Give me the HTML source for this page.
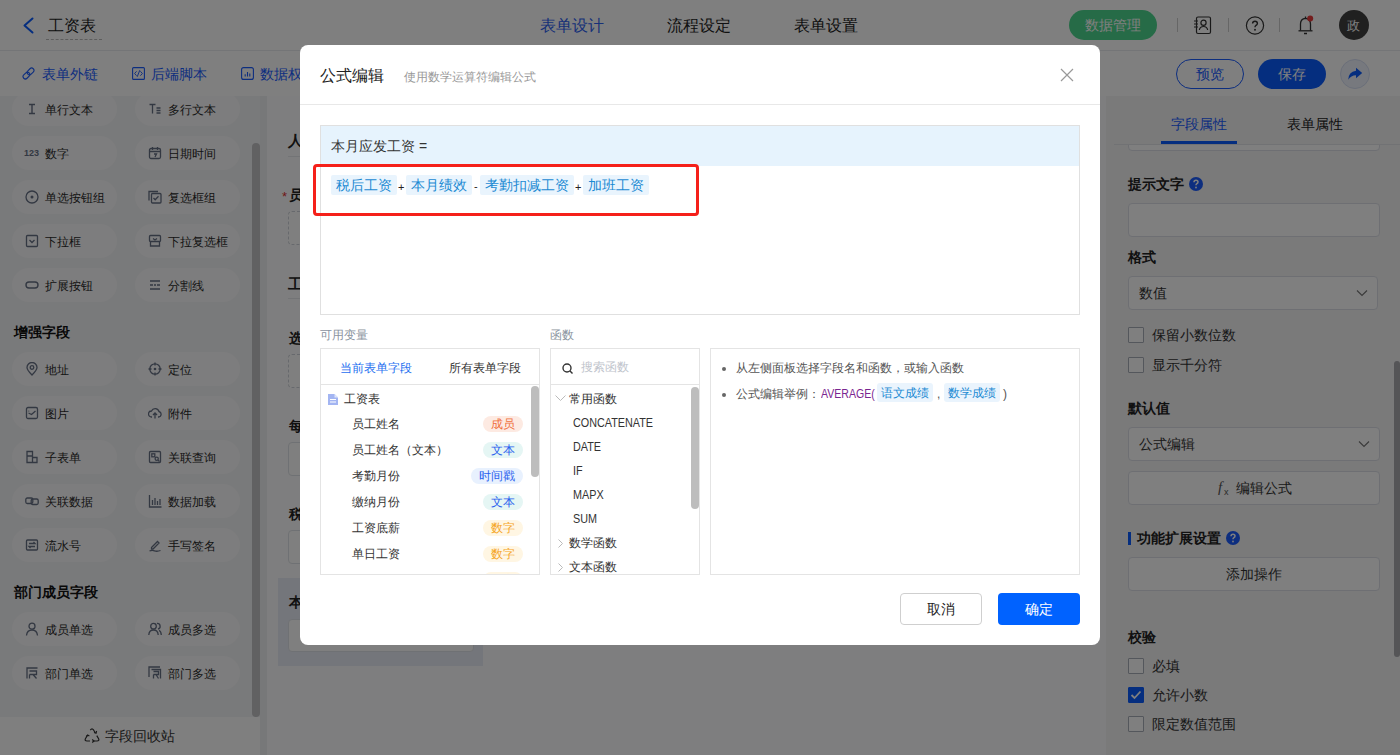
<!DOCTYPE html>
<html><head><meta charset="utf-8">
<style>
*{box-sizing:border-box;margin:0;padding:0}
html,body{width:1400px;height:755px;overflow:hidden;background:#fff;font-family:"Liberation Sans",sans-serif;color:#333;font-size:14px}
.a{position:absolute}
.t{position:absolute;white-space:nowrap;line-height:1}
#overlay{position:absolute;left:0;top:0;width:1400px;height:755px;background:rgba(0,0,0,.5)}
#modal{position:absolute;left:300px;top:45px;width:800px;height:600px;background:#fff;border-radius:8px;overflow:hidden}
.pill{position:absolute;width:105px;height:34px;border-radius:17px;background:#fbfbfc}
.pill .ic{position:absolute;left:13px;top:10px;width:14px;height:14px}
.pill .tx{position:absolute;left:33px;top:11px;font-size:12px;line-height:14px;color:#2a2a2a;white-space:nowrap}
.sec{position:absolute;left:14px;font-size:14px;font-weight:bold;color:#111;line-height:14px}
.lbl{position:absolute;font-size:14px;font-weight:bold;color:#222;line-height:14px}
.inp{position:absolute;border:1px solid #dcdfe6;border-radius:4px;background:#fff}
.cb{position:absolute;left:1128px;width:16px;height:16px;border:1px solid #a9aeb8;border-radius:1px;background:#fff}
.cbt{position:absolute;left:1152px;font-size:14px;color:#333;line-height:14px;white-space:nowrap}
.tok{position:absolute;height:20px;background:#e9f4fd;border-radius:2px;color:#1b8ad3;font-size:14px;line-height:20px;text-align:center;white-space:nowrap}
.tok2{position:absolute;height:19px;background:#eaf4fd;border-radius:3px;color:#1b8ad3;font-size:12px;line-height:20px;text-align:center;white-space:nowrap}
.fn{position:absolute;left:22px;font-size:12px;color:#333;line-height:12px;white-space:nowrap;transform:scaleX(0.9);transform-origin:0 0}
</style></head><body>
<!-- ========== BACKGROUND PAGE ========== -->
<div id="page">
  <!-- header -->
  <div class="a" style="left:0;top:0;width:1400px;height:51px;background:#fff;border-bottom:1px solid #e8eaee"></div>
  <svg class="a" style="left:22px;top:17px" width="14" height="18" viewBox="0 0 14 18"><path d="M10.5 1.5 L2.5 8.5 L10.5 15.5" fill="none" stroke="#0b5cff" stroke-width="2" stroke-linecap="round" stroke-linejoin="round"/></svg>
  <div class="t" style="left:48px;top:18px;font-size:16px;color:#222">工资表</div>
  <div class="a" style="left:46px;top:39px;width:56px;border-top:1px dashed #bbb"></div>
  <div class="t" style="left:540px;top:18px;font-size:16px;color:#2e62f0">表单设计</div>
  <div class="t" style="left:667px;top:18px;font-size:16px;color:#222">流程设定</div>
  <div class="t" style="left:794px;top:18px;font-size:16px;color:#222">表单设置</div>
  <div class="a" style="left:1069px;top:10px;width:88px;height:30px;border-radius:15px;background:#4cd68e"></div>
  <div class="t" style="left:1085px;top:18px;font-size:14px;color:#fff">数据管理</div>
  <div class="a" style="left:1177px;top:18px;width:1px;height:14px;background:#ccc"></div>
  <div class="a" style="left:1228px;top:18px;width:1px;height:14px;background:#ccc"></div>
  <div class="a" style="left:1279px;top:18px;width:1px;height:14px;background:#ccc"></div>
  <!-- contact icon -->
  <svg class="a" style="left:1193px;top:16px" width="20" height="19" viewBox="0 0 20 19"><rect x="3.5" y="1" width="14" height="16.5" rx="1.5" fill="none" stroke="#333" stroke-width="1.2"/><circle cx="10.5" cy="6.8" r="2.6" fill="none" stroke="#333" stroke-width="1.2"/><path d="M6.3 14 Q7 10.5 10.5 10.5 Q14 10.5 14.7 14" fill="none" stroke="#333" stroke-width="1.2"/><path d="M1 5h4M1 8h4M1 11h4" stroke="#333" stroke-width="1.1"/></svg>
  <!-- help icon -->
  <svg class="a" style="left:1245px;top:16px" width="20" height="20" viewBox="0 0 20 20"><circle cx="10" cy="9.5" r="8.6" fill="none" stroke="#333" stroke-width="1.2"/><path d="M7.6 7.6 Q7.6 5.2 10 5.2 Q12.4 5.2 12.4 7.4 Q12.4 8.7 10.8 9.5 Q10 10 10 11.3" fill="none" stroke="#333" stroke-width="1.4"/><circle cx="10" cy="13.8" r="0.95" fill="#333"/></svg>
  <!-- bell -->
  <svg class="a" style="left:1296px;top:14px" width="20" height="22" viewBox="0 0 20 22"><path d="M4.5 16.5 V10 Q4.5 4.8 9.5 4.3 Q14.5 4.8 14.5 10 V16.5" fill="none" stroke="#333" stroke-width="1.3"/><path d="M2.5 16.8 H16.5" stroke="#333" stroke-width="1.3"/><path d="M8 19.5 H11" stroke="#333" stroke-width="1.5"/><path d="M9.5 2.5V4.3" stroke="#333" stroke-width="1.3"/><circle cx="14.2" cy="4.6" r="3" fill="#e83a3a"/></svg>
  <div class="a" style="left:1339px;top:10px;width:30px;height:30px;border-radius:15px;background:#404040"></div>
  <div class="t" style="left:1347px;top:19px;font-size:13px;color:#fff">政</div>

  <!-- second bar -->
  <div class="a" style="left:0;top:51px;width:1400px;height:45px;background:#fff"></div>
  <svg class="a" style="left:22px;top:67px" width="13" height="13" viewBox="0 0 13 13"><g transform="rotate(-45 6.5 6.5)"><rect x="-0.2" y="4.2" width="7.6" height="4.6" rx="2.3" fill="none" stroke="#1a5cff" stroke-width="1.1"/><rect x="5.6" y="4.2" width="7.6" height="4.6" rx="2.3" fill="none" stroke="#1a5cff" stroke-width="1.1"/></g></svg>
  <div class="t" style="left:42px;top:67px;font-size:14px;color:#1a5cff">表单外链</div>
  <svg class="a" style="left:132px;top:67px" width="13" height="13" viewBox="0 0 13 13"><rect x="0.6" y="0.6" width="11.8" height="11.8" rx="1" fill="none" stroke="#1a5cff" stroke-width="1.1"/><path d="M4.6 4.3 L2.6 6.5 L4.6 8.7 M8.4 4.3 L10.4 6.5 L8.4 8.7 M7.8 3.2 L5.2 9.8" fill="none" stroke="#1a5cff" stroke-width="0.95"/></svg>
  <div class="t" style="left:151px;top:67px;font-size:14px;color:#1a5cff">后端脚本</div>
  <svg class="a" style="left:241px;top:67px" width="13" height="13" viewBox="0 0 13 13"><rect x="0.6" y="0.6" width="11.8" height="11.8" rx="2" fill="none" stroke="#1a5cff" stroke-width="1.1"/><path d="M4.2 9.5V7.2 M6.5 9.5V5 M8.8 9.5V6.5" stroke="#1a5cff" stroke-width="1.1"/></svg>
  <div class="t" style="left:260px;top:67px;font-size:14px;color:#1a5cff">数据权限</div>
  <div class="a" style="left:1176px;top:59px;width:68px;height:30px;border-radius:15px;border:1px solid #1a5cff;background:#fff"></div>
  <div class="t" style="left:1196px;top:67px;font-size:14px;color:#1a5cff">预览</div>
  <div class="a" style="left:1258px;top:59px;width:68px;height:30px;border-radius:15px;background:#0b5cff"></div>
  <div class="t" style="left:1278px;top:67px;font-size:14px;color:#fff">保存</div>
  <div class="a" style="left:1340px;top:59px;width:30px;height:30px;border-radius:15px;background:#eef2fc;border:1px solid #d6def3"></div>
  <svg class="a" style="left:1347px;top:67px" width="16" height="14" viewBox="0 0 16 14"><path d="M9 0.8 L15.2 6 L9 11.2 V8.2 Q4 8.2 1.2 12.8 Q1.5 4.8 9 3.8 Z" fill="#0b5cff"/></svg>

  <!-- left panel -->
  <div class="a" style="left:0;top:96px;width:260px;height:621px;background:#f3f4f7;overflow:hidden">
<div class="pill" style="left:12px;top:-4px"><svg class="ic" width="14" height="14" viewBox="0 0 14 14" fill="none" stroke="#667085" stroke-width="1.3"><path d="M4 2.5h6M4 11.5h6M7 2.5v9" stroke-width="1.4"/></svg><div class="tx">单行文本</div></div>
<div class="pill" style="left:135px;top:-4px"><svg class="ic" width="14" height="14" viewBox="0 0 14 14" fill="none" stroke="#667085" stroke-width="1.3"><path d="M1.5 2.5h6M4.5 2.5v9M8.5 6h4M8.5 8.5h4M8.5 11h4" stroke-width="1.3"/></svg><div class="tx">多行文本</div></div>
<div class="pill" style="left:12px;top:40px"><div class="ic" style="font-size:9px;font-weight:bold;color:#667085;top:12px;left:12px;width:auto;line-height:10px">123</div><div class="tx">数字</div></div>
<div class="pill" style="left:135px;top:40px"><svg class="ic" width="14" height="14" viewBox="0 0 14 14" fill="none" stroke="#667085" stroke-width="1.3"><rect x="1.5" y="2.5" width="11" height="10" rx="1.5"/><path d="M4.5 1v3M9.5 1v3M1.5 5.5h11M6 8h2.5L7 11"/></svg><div class="tx">日期时间</div></div>
<div class="pill" style="left:12px;top:84px"><svg class="ic" width="14" height="14" viewBox="0 0 14 14" fill="none" stroke="#667085" stroke-width="1.3"><circle cx="7" cy="7" r="6"/><circle cx="7" cy="7" r="1.5" fill="#667085" stroke="none"/></svg><div class="tx">单选按钮组</div></div>
<div class="pill" style="left:135px;top:84px"><svg class="ic" width="14" height="14" viewBox="0 0 14 14" fill="none" stroke="#667085" stroke-width="1.3"><path d="M1 10.5V1.5h9"/><rect x="3.5" y="3.5" width="9.5" height="9.5" rx="1"/><path d="M5.5 8l1.7 1.7L10.5 6.3"/></svg><div class="tx">复选框组</div></div>
<div class="pill" style="left:12px;top:128px"><svg class="ic" width="14" height="14" viewBox="0 0 14 14" fill="none" stroke="#667085" stroke-width="1.3"><rect x="1.5" y="1.5" width="11" height="11" rx="1"/><path d="M4.5 6l2.5 2.5L9.5 6"/></svg><div class="tx">下拉框</div></div>
<div class="pill" style="left:135px;top:128px"><svg class="ic" width="14" height="14" viewBox="0 0 14 14" fill="none" stroke="#667085" stroke-width="1.3"><rect x="1.5" y="1.5" width="11" height="6" rx="1"/><path d="M2.5 7.5v4.5h9V7.5M5 4.5l2 1.5 2-1.5"/></svg><div class="tx">下拉复选框</div></div>
<div class="pill" style="left:12px;top:172px"><svg class="ic" width="14" height="14" viewBox="0 0 14 14" fill="none" stroke="#667085" stroke-width="1.3"><rect x="1" y="4" width="12" height="6" rx="3" stroke-width="1.4"/></svg><div class="tx">扩展按钮</div></div>
<div class="pill" style="left:135px;top:172px"><svg class="ic" width="14" height="14" viewBox="0 0 14 14" fill="none" stroke="#667085" stroke-width="1.3"><path d="M2 3h10M2 7h3M6 7h2M9 7h3M2 11h10"/></svg><div class="tx">分割线</div></div>
<div class="pill" style="left:12px;top:256px"><svg class="ic" width="14" height="14" viewBox="0 0 14 14" fill="none" stroke="#667085" stroke-width="1.3"><path d="M7 13Q2 8 2 5.5A5 5 0 0 1 12 5.5Q12 8 7 13Z"/><circle cx="7" cy="5.5" r="1.8"/></svg><div class="tx">地址</div></div>
<div class="pill" style="left:135px;top:256px"><svg class="ic" width="14" height="14" viewBox="0 0 14 14" fill="none" stroke="#667085" stroke-width="1.3"><circle cx="7" cy="7" r="5.2"/><circle cx="7" cy="7" r="1.3" fill="#667085" stroke="none"/><path d="M7 0.5v3M7 10.5v3M0.5 7h3M10.5 7h3"/></svg><div class="tx">定位</div></div>
<div class="pill" style="left:12px;top:300px"><svg class="ic" width="14" height="14" viewBox="0 0 14 14" fill="none" stroke="#667085" stroke-width="1.3"><rect x="1.5" y="1.5" width="11" height="11" rx="1.5"/><path d="M3.5 7 L6.5 8.5 L10.5 5"/><circle cx="3.8" cy="5" r="0.6" fill="#667085" stroke="none"/></svg><div class="tx">图片</div></div>
<div class="pill" style="left:135px;top:300px"><svg class="ic" width="14" height="14" viewBox="0 0 14 14" fill="none" stroke="#667085" stroke-width="1.3"><path d="M4 11H3.5A3 3 0 0 1 3.5 5 4 4 0 0 1 11 5.5 2.8 2.8 0 0 1 10.5 11H10M7 12.5V7M5 9l2-2 2 2"/></svg><div class="tx">附件</div></div>
<div class="pill" style="left:12px;top:344px"><svg class="ic" width="14" height="14" viewBox="0 0 14 14" fill="none" stroke="#667085" stroke-width="1.3"><path d="M2 1.5h5.5v11H2zM2 6h5.5M7.5 7.5h4.5v5H7.5"/></svg><div class="tx">子表单</div></div>
<div class="pill" style="left:135px;top:344px"><svg class="ic" width="14" height="14" viewBox="0 0 14 14" fill="none" stroke="#667085" stroke-width="1.3"><rect x="1.5" y="1.5" width="11" height="11" rx="1"/><rect x="3.8" y="3.8" width="3" height="3"/><circle cx="8.7" cy="8.7" r="1.6"/><path d="M9.9 9.9L11.5 11.5"/></svg><div class="tx">关联查询</div></div>
<div class="pill" style="left:12px;top:388px"><svg class="ic" width="14" height="14" viewBox="0 0 14 14" fill="none" stroke="#667085" stroke-width="1.3"><rect x="0.8" y="4" width="7" height="5.5" rx="1.5"/><rect x="6.2" y="5" width="7" height="5.5" rx="1.5"/></svg><div class="tx">关联数据</div></div>
<div class="pill" style="left:135px;top:388px"><svg class="ic" width="14" height="14" viewBox="0 0 14 14" fill="none" stroke="#667085" stroke-width="1.3"><path d="M1.5 1v12h12M4.5 11V6M7 11V4M9.5 11V7M12 11V5"/></svg><div class="tx">数据加载</div></div>
<div class="pill" style="left:12px;top:432px"><svg class="ic" width="14" height="14" viewBox="0 0 14 14" fill="none" stroke="#667085" stroke-width="1.3"><rect x="1.5" y="2" width="11" height="10" rx="1"/><path d="M4 5.5h6L8.5 4M10 8.5H4L5.5 10"/></svg><div class="tx">流水号</div></div>
<div class="pill" style="left:135px;top:432px"><svg class="ic" width="14" height="14" viewBox="0 0 14 14" fill="none" stroke="#667085" stroke-width="1.3"><path d="M3.5 9.5 L9.5 3.5 L11 5 L5 11 H3.5 Z"/><path d="M1.5 13 Q4 11.8 6.5 12.8 T12.5 12.5"/></svg><div class="tx">手写签名</div></div>
<div class="pill" style="left:12px;top:516px"><svg class="ic" width="14" height="14" viewBox="0 0 14 14" fill="none" stroke="#667085" stroke-width="1.3"><circle cx="7" cy="4.2" r="3"/><path d="M1.5 13.5Q2 8 7 8Q12 8 12.5 13.5"/></svg><div class="tx">成员单选</div></div>
<div class="pill" style="left:135px;top:516px"><svg class="ic" width="14" height="14" viewBox="0 0 14 14" fill="none" stroke="#667085" stroke-width="1.3"><circle cx="5.5" cy="4.2" r="2.8"/><path d="M0.8 13Q1 8 5.5 8Q10 8 10.2 13M9 1.5A2.8 2.8 0 0 1 10 7M11 8.3Q13 9 13.3 13"/></svg><div class="tx">成员多选</div></div>
<div class="pill" style="left:12px;top:560px"><svg class="ic" width="14" height="14" viewBox="0 0 14 14" fill="none" stroke="#667085" stroke-width="1.3"><path d="M12.5 2H2v10.5M4.5 5h7v3.5h-7M4.5 8.5V12.5M8 8.5L11.5 12.5"/></svg><div class="tx">部门单选</div></div>
<div class="pill" style="left:135px;top:560px"><svg class="ic" width="14" height="14" viewBox="0 0 14 14" fill="none" stroke="#667085" stroke-width="1.3"><path d="M12 1H1v10M3.5 3.5h9v9M5.5 5.5h5v3h-5M5.5 8.5v4M8 8.5l2.5 4"/></svg><div class="tx">部门多选</div></div>
<div class="sec" style="top:229px">增强字段</div>
<div class="sec" style="top:489px">部门成员字段</div>
  </div>
  <div class="a" style="left:252px;top:143px;width:8px;height:574px;border-radius:4px;background:#c2c2c5"></div>
  <div class="a" style="left:0;top:717px;width:260px;height:38px;background:#fff"></div>
  <svg class="a" style="left:84px;top:728px" width="16" height="15" viewBox="0 0 16 15"><path d="M6.3 2.2 Q8 -0.3 9.7 2.2 L11.2 4.8 M12.8 7.6 L14.6 10.8 Q15.6 13 13 13 H10 M6 13 H3 Q0.4 13 1.4 10.8 L3.5 7.2" fill="none" stroke="#333" stroke-width="1.2"/><path d="M10 4.5 L12 5.2 L12.6 3 M8.2 11.5 L10 13 L8.2 14.5 M2.2 8.6 L3.6 7 L5.4 8" fill="none" stroke="#333" stroke-width="1.2"/></svg>
  <div class="t" style="left:105px;top:729px;font-size:14px;color:#333">字段回收站</div>
  <div class="a" style="left:260px;top:96px;width:7px;height:659px;background:#eef0f3"></div>
  <!-- center -->
  <div class="a" style="left:267px;top:96px;width:839px;height:659px;background:#fdfdfe"></div>
  <div class="t" style="left:288px;top:133px;font-size:15px;font-weight:bold;color:#222">人员信息</div>
  <div class="a" style="left:288px;top:156px;width:800px;height:1px;background:#e6e8ec"></div>
  <div class="t" style="left:282px;top:190px;font-size:13px;color:#e03030">*</div>
  <div class="t" style="left:289px;top:188px;font-size:14px;font-weight:bold;color:#222">员工姓名</div>
  <div class="a" style="left:288px;top:211px;width:186px;height:34px;border:1px dashed #cfd3da;border-radius:4px;background:#fff"></div>
  <div class="t" style="left:288px;top:276px;font-size:15px;font-weight:bold;color:#222">工资信息</div>
  <div class="a" style="left:288px;top:298px;width:800px;height:1px;background:#e6e8ec"></div>
  <div class="t" style="left:289px;top:331px;font-size:14px;font-weight:bold;color:#222">选择月份</div>
  <div class="a" style="left:288px;top:354px;width:186px;height:34px;border:1px dashed #cfd3da;border-radius:4px;background:#fff"></div>
  <div class="t" style="left:289px;top:419px;font-size:14px;font-weight:bold;color:#222">每月工资</div>
  <div class="a" style="left:288px;top:442px;width:186px;height:34px;border:1px solid #dfe2e8;border-radius:4px;background:#fff"></div>
  <div class="t" style="left:289px;top:507px;font-size:14px;font-weight:bold;color:#222">税后工资</div>
  <div class="a" style="left:288px;top:530px;width:186px;height:34px;border:1px solid #dfe2e8;border-radius:4px;background:#fff"></div>
  <div class="a" style="left:278px;top:578px;width:205px;height:88px;background:#e9edf6"></div>
  <div class="t" style="left:289px;top:595px;font-size:14px;font-weight:bold;color:#222">本月应发工资</div>
  <div class="a" style="left:288px;top:619px;width:186px;height:33px;border:1px solid #dfe2e8;border-radius:4px;background:#fff"></div>
  <!-- right panel -->
  <div class="a" style="left:1106px;top:96px;width:294px;height:659px;background:#f4f4f5"></div>
  <div class="inp" style="left:1128px;top:120px;width:252px;height:31px"></div>
  <div class="a" style="left:1106px;top:96px;width:294px;height:48px;background:#f4f4f5"></div>
  <div class="t" style="left:1171px;top:117px;font-size:14px;color:#1a5cff">字段属性</div>
  <div class="t" style="left:1287px;top:117px;font-size:14px;color:#222">表单属性</div>
  <div class="a" style="left:1114px;top:144px;width:286px;height:1px;background:#e2e4e8"></div>
  <div class="a" style="left:1161px;top:141px;width:76px;height:3px;background:#0b5cff"></div>
  <div class="lbl" style="left:1128px;top:177px">提示文字</div>
  <svg class="a" style="left:1189px;top:177px" width="14" height="14" viewBox="0 0 14 14"><circle cx="7" cy="7" r="7" fill="#1a5cff"/><path d="M5 5.3Q5 3.3 7 3.3Q9 3.3 9 5.1Q9 6.2 7.7 6.8Q7 7.2 7 8.3" fill="none" stroke="#fff" stroke-width="1.5"/><circle cx="7" cy="10.5" r="0.9" fill="#fff"/></svg>
  <div class="inp" style="left:1128px;top:203px;width:252px;height:34px"></div>
  <div class="lbl" style="left:1128px;top:250px">格式</div>
  <div class="inp" style="left:1128px;top:276px;width:250px;height:34px"></div>
  <div class="t" style="left:1139px;top:286px;font-size:14px;color:#333">数值</div>
  <svg class="a" style="left:1356px;top:289px" width="12" height="8" viewBox="0 0 12 8"><path d="M1 1.5L6 6.5L11 1.5" fill="none" stroke="#777" stroke-width="1.2"/></svg>
  <div class="cb" style="top:327px"></div><div class="cbt" style="top:328px">保留小数位数</div>
  <div class="cb" style="top:357px"></div><div class="cbt" style="top:358px">显示千分符</div>
  <div class="lbl" style="left:1128px;top:401px">默认值</div>
  <div class="inp" style="left:1128px;top:427px;width:252px;height:34px"></div>
  <div class="t" style="left:1139px;top:437px;font-size:14px;color:#333">公式编辑</div>
  <svg class="a" style="left:1358px;top:440px" width="12" height="8" viewBox="0 0 12 8"><path d="M1 1.5L6 6.5L11 1.5" fill="none" stroke="#777" stroke-width="1.2"/></svg>
  <div class="inp" style="left:1128px;top:471px;width:252px;height:34px"></div>
  <div class="t" style="left:1218px;top:480px;font-size:15px;font-style:italic;font-family:'Liberation Serif',serif;color:#555">f</div>
  <div class="t" style="left:1224px;top:488px;font-size:9px;color:#555">x</div>
  <div class="t" style="left:1236px;top:481px;font-size:14px;color:#333">编辑公式</div>
  <div class="a" style="left:1128px;top:532px;width:3px;height:13px;background:#0b5cff"></div>
  <div class="lbl" style="left:1137px;top:531px">功能扩展设置</div>
  <svg class="a" style="left:1226px;top:531px" width="14" height="14" viewBox="0 0 14 14"><circle cx="7" cy="7" r="7" fill="#1a5cff"/><path d="M5 5.3Q5 3.3 7 3.3Q9 3.3 9 5.1Q9 6.2 7.7 6.8Q7 7.2 7 8.3" fill="none" stroke="#fff" stroke-width="1.5"/><circle cx="7" cy="10.5" r="0.9" fill="#fff"/></svg>
  <div class="inp" style="left:1128px;top:557px;width:252px;height:34px"></div>
  <div class="t" style="left:1226px;top:567px;font-size:14px;color:#333">添加操作</div>
  <div class="lbl" style="left:1128px;top:630px">校验</div>
  <div class="cb" style="top:658px"></div><div class="cbt" style="top:659px">必填</div>
  <div class="cb" style="top:687px;background:#0b5cff;border-color:#0b5cff"><svg style="position:absolute;left:1px;top:2px" width="12" height="10" viewBox="0 0 12 10"><path d="M1.5 5L4.5 8L10.5 1.5" fill="none" stroke="#fff" stroke-width="1.8"/></svg></div><div class="cbt" style="top:688px">允许小数</div>
  <div class="cb" style="top:716px"></div><div class="cbt" style="top:717px">限定数值范围</div>
  <div class="a" style="left:1394px;top:361px;width:6px;height:296px;border-radius:3px;background:#ababae"></div>
</div>
<div id="overlay"></div>
<!-- ========== MODAL ========== -->
<div id="modal">
  <div class="t" style="left:20px;top:23px;font-size:16px;color:#222">公式编辑</div>
  <div class="t" style="left:104px;top:26px;font-size:12px;color:#999">使用数学运算符编辑公式</div>
  <svg class="a" style="left:760px;top:23px" width="14" height="14" viewBox="0 0 14 14"><path d="M1 1L13 13M13 1L1 13" stroke="#999" stroke-width="1.2"/></svg>
  <div class="a" style="left:0;top:59px;width:800px;height:1px;background:#e8e8e8"></div>
  <!-- formula box -->
  <div class="a" style="left:20px;top:80px;width:760px;height:190px;border:1px solid #e0e0e0;background:#fff"></div>
  <div class="a" style="left:21px;top:81px;width:758px;height:40px;background:#e6f3fd"></div>
  <div class="t" style="left:31px;top:94px;font-size:14px;color:#333">本月应发工资 =</div>
  <div class="a" style="left:13px;top:119px;width:386px;height:52px;border:3px solid #f5201a;border-radius:4px"></div>
  <div class="tok" style="left:31px;top:130px;width:66px">税后工资</div>
  <div class="t" style="left:98px;top:137px;font-size:11px;color:#222">+</div>
  <div class="tok" style="left:106px;top:130px;width:66px">本月绩效</div>
  <div class="t" style="left:174px;top:136px;font-size:11px;color:#222">-</div>
  <div class="tok" style="left:180px;top:130px;width:94px">考勤扣减工资</div>
  <div class="t" style="left:275px;top:137px;font-size:11px;color:#222">+</div>
  <div class="tok" style="left:283px;top:130px;width:66px">加班工资</div>
  <!-- labels -->
  <div class="t" style="left:20px;top:284px;font-size:12px;color:#8a93a0">可用变量</div>
  <div class="t" style="left:250px;top:284px;font-size:12px;color:#8a93a0">函数</div>
  <!-- variables panel -->
  <div class="a" style="left:20px;top:303px;width:220px;height:227px;border:1px solid #e4e4e4;background:#fff;overflow:hidden">
    <div class="t" style="left:19px;top:13px;font-size:12px;color:#1e6ff0">当前表单字段</div>
    <div class="t" style="left:128px;top:13px;font-size:12px;color:#333">所有表单字段</div>
    <div class="a" style="left:0;top:35px;width:220px;height:1px;background:#e4e4e4"></div>
    <svg class="a" style="left:7px;top:45px" width="10" height="11" viewBox="0 0 10 11"><path d="M0 0H6.5L10 3.5V11H0Z" fill="#a3b5f2"/><path d="M2 5.5H8M2 8H8" stroke="#fff" stroke-width="1"/><path d="M6.5 0V3.5H10" fill="#dfe6fb"/></svg>
    <div class="t" style="left:23px;top:44px;font-size:12px;color:#333">工资表</div>
    <div class="t" style="left:31px;top:69px;font-size:12px;color:#333">员工姓名</div>
    <div class="a" style="left:162px;top:67px;width:40px;height:16px;border-radius:8px;background:#fdeae2;color:#f0703c;font-size:12px;line-height:16px;text-align:center;white-space:nowrap">成员</div>
    <div class="t" style="left:31px;top:95px;font-size:12px;color:#333">员工姓名（文本）</div>
    <div class="a" style="left:162px;top:93px;width:40px;height:16px;border-radius:8px;background:#e5f6f4;color:#2a62ee;font-size:12px;line-height:16px;text-align:center;white-space:nowrap">文本</div>
    <div class="t" style="left:31px;top:121px;font-size:12px;color:#333">考勤月份</div>
    <div class="a" style="left:150px;top:119px;width:52px;height:16px;border-radius:8px;background:#e8f1fe;color:#2a62ee;font-size:12px;line-height:16px;text-align:center;white-space:nowrap">时间戳</div>
    <div class="t" style="left:31px;top:147px;font-size:12px;color:#333">缴纳月份</div>
    <div class="a" style="left:162px;top:145px;width:40px;height:16px;border-radius:8px;background:#e5f6f4;color:#2a62ee;font-size:12px;line-height:16px;text-align:center;white-space:nowrap">文本</div>
    <div class="t" style="left:31px;top:173px;font-size:12px;color:#333">工资底薪</div>
    <div class="a" style="left:162px;top:171px;width:40px;height:16px;border-radius:8px;background:#fff6e3;color:#f5a524;font-size:12px;line-height:16px;text-align:center;white-space:nowrap">数字</div>
    <div class="t" style="left:31px;top:199px;font-size:12px;color:#333">单日工资</div>
    <div class="a" style="left:162px;top:197px;width:40px;height:16px;border-radius:8px;background:#fff6e3;color:#f5a524;font-size:12px;line-height:16px;text-align:center;white-space:nowrap">数字</div>
    <div class="t" style="left:31px;top:225px;font-size:12px;color:#333">日工资</div>
    <div class="a" style="left:162px;top:223px;width:40px;height:16px;border-radius:8px;background:#fff6e3;color:#f5a524;font-size:12px;line-height:16px;text-align:center;white-space:nowrap">数字</div>
    <div class="a" style="left:210px;top:37px;width:8px;height:91px;border-radius:4px;background:#bdbdbd"></div>
  </div>
  <!-- functions panel -->
  <div class="a" style="left:250px;top:303px;width:150px;height:227px;border:1px solid #e4e4e4;background:#fff;overflow:hidden">
    <svg class="a" style="left:11px;top:14px" width="12" height="11" viewBox="0 0 12 11"><circle cx="5" cy="5" r="4" fill="none" stroke="#333" stroke-width="1.4"/><path d="M8 8L10.5 10.5" stroke="#333" stroke-width="1.4"/></svg>
    <div class="t" style="left:30px;top:12px;font-size:12px;color:#c0c4cc">搜索函数</div>
    <div class="a" style="left:0;top:35px;width:150px;height:1px;background:#e4e4e4"></div>
    <svg class="a" style="left:4px;top:46px" width="11" height="7" viewBox="0 0 11 7"><path d="M0.5 0.5L5.5 5.5L10.5 0.5" fill="none" stroke="#bbb" stroke-width="1"/></svg>
    <div class="t" style="left:18px;top:44px;font-size:12px;color:#333">常用函数</div>
    <div class="fn" style="top:68px">CONCATENATE</div>
    <div class="fn" style="top:92px">DATE</div>
    <div class="fn" style="top:116px">IF</div>
    <div class="fn" style="top:140px">MAPX</div>
    <div class="fn" style="top:164px">SUM</div>
    <svg class="a" style="left:7px;top:190px" width="5" height="9" viewBox="0 0 5 9"><path d="M0.5 0.5L4.5 4.5L0.5 8.5" fill="none" stroke="#bbb" stroke-width="1"/></svg>
    <div class="t" style="left:18px;top:188px;font-size:12px;color:#333">数学函数</div>
    <svg class="a" style="left:7px;top:214px" width="5" height="9" viewBox="0 0 5 9"><path d="M0.5 0.5L4.5 4.5L0.5 8.5" fill="none" stroke="#bbb" stroke-width="1"/></svg>
    <div class="t" style="left:18px;top:212px;font-size:12px;color:#333">文本函数</div>
    <div class="a" style="left:140px;top:38px;width:8px;height:122px;border-radius:4px;background:#bdbdbd"></div>
  </div>
  <!-- help panel -->
  <div class="a" style="left:410px;top:303px;width:370px;height:227px;border:1px solid #e4e4e4;background:#fff">
    <div class="a" style="left:11px;top:18px;width:4px;height:4px;border-radius:2px;background:#666"></div>
    <div class="t" style="left:25px;top:13px;font-size:12px;color:#555">从左侧面板选择字段名和函数，或输入函数</div>
    <div class="a" style="left:11px;top:44px;width:4px;height:4px;border-radius:2px;background:#666"></div>
    <div class="t" style="left:25px;top:39px;font-size:12px;color:#555">公式编辑举例：</div>
    <div class="t" style="left:110px;top:39px;font-size:12px;color:#7a2590;transform:scaleX(0.88);transform-origin:0 0">AVERAGE(</div>
    <div class="tok2" style="left:166px;top:34px;width:56px">语文成绩</div>
    <div class="t" style="left:226px;top:39px;font-size:12px;color:#555">,</div>
    <div class="tok2" style="left:233px;top:34px;width:56px">数学成绩</div>
    <div class="t" style="left:292px;top:39px;font-size:12px;color:#555">)</div>
  </div>
  <!-- buttons -->
  <div class="a" style="left:600px;top:548px;width:82px;height:32px;border:1px solid #cfcfcf;border-radius:4px;background:#fff"></div>
  <div class="t" style="left:627px;top:557px;font-size:14px;color:#222">取消</div>
  <div class="a" style="left:698px;top:548px;width:82px;height:32px;border-radius:4px;background:#0062ff"></div>
  <div class="t" style="left:725px;top:557px;font-size:14px;color:#fff">确定</div>
</div>
</body></html>
